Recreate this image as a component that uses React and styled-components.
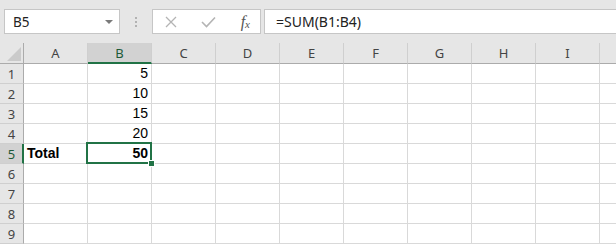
import styled, { createGlobalStyle, css } from "styled-components";

const GlobalStyle = createGlobalStyle`
  html, body {
    margin: 0;
    padding: 0;
    background: #e6e6e6;
    overflow: hidden;
  }
  #root {
    width: 616px;
    height: 244px;
    overflow: hidden;
  }
`;

// the last column (J) is only partly on screen, so its letter is left out
const COLS = ["A", "B", "C", "D", "E", "F", "G", "H", "I", ""];
const ROWS = [1, 2, 3, 4, 5, 6, 7, 8, 9];

const data = {
  B1: { v: "5", num: true },
  B2: { v: "10", num: true },
  B3: { v: "15", num: true },
  B4: { v: "20", num: true },
  A5: { v: "Total", bold: true },
  B5: { v: "50", num: true, bold: true },
};

const active = { col: "B", row: 5 };

function App() {
  return (
    <>
      <GlobalStyle />
      <Window>
        <FormulaBar>
          <NameBox>
            <span>B5</span>
            <Caret />
          </NameBox>
          <Grip>
            <i />
            <i />
            <i />
          </Grip>
          <FxButtons>
            <svg width="12" height="12" viewBox="0 0 12 12">
              <path d="M1 1 L11 11 M11 1 L1 11" stroke="#b4b4b4" strokeWidth="1.3" fill="none" />
            </svg>
            <svg width="15" height="12" viewBox="0 0 15 12">
              <path d="M1 6 L5.5 10.5 L14 1.5" stroke="#b4b4b4" strokeWidth="1.6" fill="none" />
            </svg>
            <FxLabel>
              f<sub>x</sub>
            </FxLabel>
          </FxButtons>
          <FormulaInput>=SUM(B1:B4)</FormulaInput>
        </FormulaBar>

        <Sheet>
          <Corner>
            <svg width="14" height="14" viewBox="0 0 14 14">
              <path d="M14 0 L14 14 L0 14 Z" fill="#cacaca" />
            </svg>
          </Corner>
          {COLS.map((c, i) => (
            <ColHead key={i} $selected={c === active.col}>
              {c}
            </ColHead>
          ))}
          {ROWS.map((r) => (
            <Row key={r} r={r} />
          ))}
        </Sheet>
      </Window>
    </>
  );
}

function Row({ r }) {
  return (
    <>
      <RowHead $selected={r === active.row}>{r}</RowHead>
      {COLS.map((c, i) => {
        const cell = c ? data[c + r] : null;
        const isActive = c === active.col && r === active.row;
        return (
          <Cell key={i} $num={cell?.num} $bold={cell?.bold}>
            {cell?.v}
            {isActive && (
              <>
                <Selection />
                <FillHandle />
              </>
            )}
          </Cell>
        );
      })}
    </>
  );
}

export default App;

const Window = styled.div`
  width: 616px;
  height: 244px;
  background: #e6e6e6;
  display: flex;
  flex-direction: column;
  font-family: "Noto Sans", "Open Sans", sans-serif;
`;

const FormulaBar = styled.div`
  height: 43px;
  box-sizing: border-box;
  padding: 9px 0 9px 4px;
  display: flex;
  align-items: stretch;
`;

const boxStyle = css`
  background: #fff;
  border: 1px solid #c6c6c6;
  box-sizing: border-box;
  display: flex;
  align-items: center;
`;

const NameBox = styled.div`
  ${boxStyle};
  width: 116px;
  padding: 0 6px 0 8px;
  justify-content: space-between;
  font-size: 13.5px;
  color: #222;
`;

const Caret = styled.span`
  width: 0;
  height: 0;
  border-left: 4px solid transparent;
  border-right: 4px solid transparent;
  border-top: 4px solid #7a7a7a;
`;

const Grip = styled.div`
  width: 32px;
  display: flex;
  flex-direction: column;
  align-items: center;
  justify-content: center;
  gap: 2px;
  i {
    width: 2px;
    height: 2px;
    background: #b2b2b2;
  }
`;

const FxButtons = styled.div`
  ${boxStyle};
  width: 109px;
  padding: 0 10px 0 12px;
  justify-content: space-between;
`;

const FxLabel = styled.span`
  font-family: "Liberation Serif", serif;
  font-style: italic;
  font-size: 16px;
  color: #555;
  sub {
    font-size: 11px;
    vertical-align: -1px;
  }
`;

const FormulaInput = styled.div`
  ${boxStyle};
  flex: 1;
  margin-left: 3px;
  border-right: none;
  padding-left: 11px;
  font-size: 14px;
  color: #222;
`;

const Sheet = styled.div`
  flex: 1;
  display: grid;
  grid-template-columns: 24px repeat(10, 64px);
  grid-template-rows: 21px;
  grid-auto-rows: 20px;
  background: #fff;
  overflow: hidden;
`;

const headBase = css`
  box-sizing: border-box;
  background: #e6e6e6;
  color: #444;
  font-size: 13px;
  display: flex;
  align-items: center;
  justify-content: center;
`;

const Corner = styled.div`
  ${headBase};
  border-right: 1px solid #ababab;
  border-bottom: 1px solid #ababab;
  align-items: flex-end;
  justify-content: flex-end;
  padding: 0 2px 2px 0;
`;

const ColHead = styled.div`
  ${headBase};
  border-right: 1px solid #cfcfcf;
  border-bottom: ${(p) => (p.$selected ? "2px solid #217346" : "1px solid #ababab")};
  background: ${(p) => (p.$selected ? "#d2d2d2" : "#e6e6e6")};
  color: ${(p) => (p.$selected ? "#1e5a38" : "#444")};
  padding-top: ${(p) => (p.$selected ? "1px" : "0")};
`;

const RowHead = styled.div`
  ${headBase};
  border-bottom: 1px solid #cfcfcf;
  border-right: ${(p) => (p.$selected ? "2px solid #217346" : "1px solid #ababab")};
  background: ${(p) => (p.$selected ? "#d2d2d2" : "#e6e6e6")};
  color: ${(p) => (p.$selected ? "#1e5a38" : "#444")};
  padding-left: ${(p) => (p.$selected ? "1px" : "0")};
`;

const Cell = styled.div`
  position: relative;
  box-sizing: border-box;
  border-right: 1px solid #d9d9d9;
  border-bottom: 1px solid #d9d9d9;
  font-family: "Liberation Sans", Arial, sans-serif;
  font-size: 14px;
  font-weight: ${(p) => (p.$bold ? 700 : 400)};
  color: #000;
  display: flex;
  align-items: flex-end;
  justify-content: ${(p) => (p.$num ? "flex-end" : "flex-start")};
  padding: 0 3px 1px 3px;
  line-height: 17px;
`;

const Selection = styled.div`
  position: absolute;
  left: -2px;
  top: -2px;
  right: -1px;
  bottom: -1px;
  border: 2px solid #217346;
  pointer-events: none;
`;

const FillHandle = styled.div`
  position: absolute;
  right: -4px;
  bottom: -4px;
  width: 5px;
  height: 5px;
  background: #217346;
  border: 1px solid #fff;
  z-index: 2;
`;
